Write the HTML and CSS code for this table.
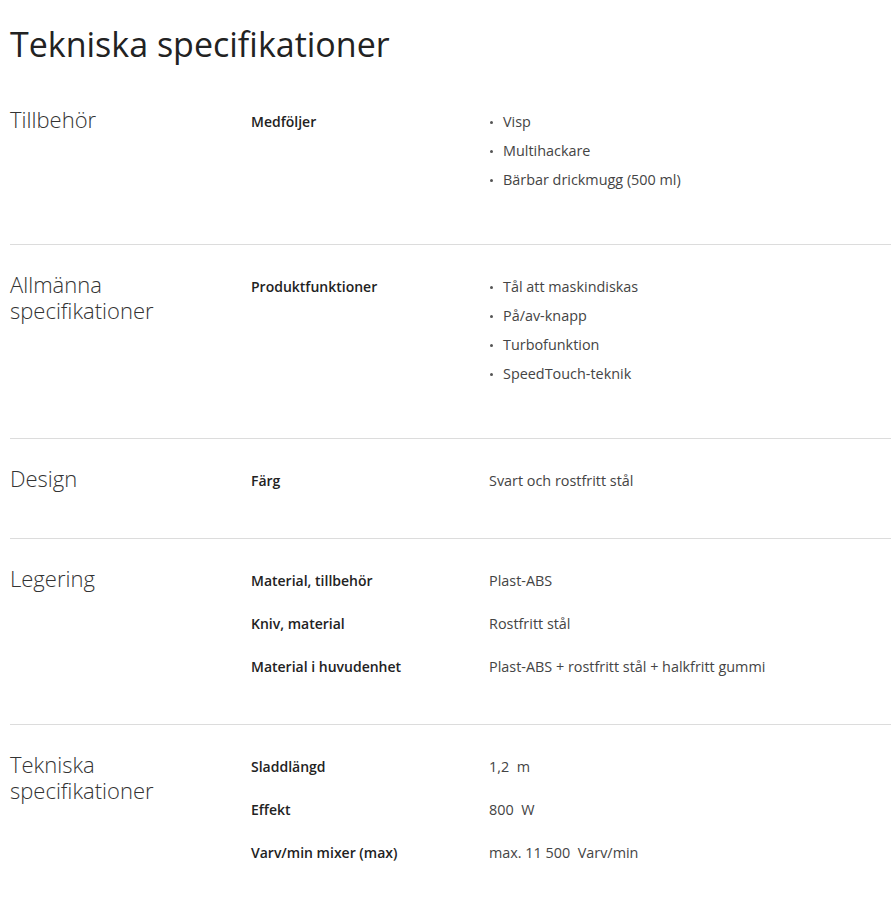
FILE: index.html
```html
<!DOCTYPE html>
<html lang="sv">
<head>
<meta charset="utf-8">
<title>Tekniska specifikationer</title>
<link rel="stylesheet" href="styles.css">
</head>
<body>
<main class="specs">
  <h1 class="title">Tekniska specifikationer</h1>

  <section class="group">
    <h2 class="group-name">Tillbehör</h2>
    <div class="rows">
      <div class="row">
        <div class="label">Medföljer</div>
        <ul class="value list">
          <li>Visp</li>
          <li>Multihackare</li>
          <li>Bärbar drickmugg (500 ml)</li>
        </ul>
      </div>
    </div>
  </section>

  <section class="group">
    <h2 class="group-name">Allmänna specifikationer</h2>
    <div class="rows">
      <div class="row">
        <div class="label">Produktfunktioner</div>
        <ul class="value list">
          <li>Tål att maskindiskas</li>
          <li>På/av-knapp</li>
          <li>Turbofunktion</li>
          <li>SpeedTouch-teknik</li>
        </ul>
      </div>
    </div>
  </section>

  <section class="group">
    <h2 class="group-name">Design</h2>
    <div class="rows">
      <div class="row">
        <div class="label">Färg</div>
        <div class="value">Svart och rostfritt stål</div>
      </div>
    </div>
  </section>

  <section class="group">
    <h2 class="group-name">Legering</h2>
    <div class="rows">
      <div class="row">
        <div class="label">Material, tillbehör</div>
        <div class="value">Plast-ABS</div>
      </div>
      <div class="row">
        <div class="label">Kniv, material</div>
        <div class="value">Rostfritt stål</div>
      </div>
      <div class="row">
        <div class="label">Material i huvudenhet</div>
        <div class="value">Plast-ABS + rostfritt stål + halkfritt gummi</div>
      </div>
    </div>
  </section>

  <section class="group">
    <h2 class="group-name">Tekniska specifikationer</h2>
    <div class="rows">
      <div class="row">
        <div class="label">Sladdlängd</div>
        <div class="value">1,2&nbsp; m</div>
      </div>
      <div class="row">
        <div class="label">Effekt</div>
        <div class="value">800&nbsp; W</div>
      </div>
      <div class="row">
        <div class="label">Varv/min mixer (max)</div>
        <div class="value">max. 11 500&nbsp; Varv/min</div>
      </div>
    </div>
  </section>
</main>
</body>
</html>
```

FILE: styles.css
```css
* { box-sizing: border-box; }

html, body {
  margin: 0;
  padding: 0;
  background: #ffffff;
}

body {
  font-family: "Open Sans", "Noto Sans", sans-serif;
  color: #333;
}

.specs {
  padding: 0 0 0 10px;
}

.title {
  margin: 0;
  padding: 24px 0 0 0;
  height: 80px;
  font-size: 34px;
  font-weight: 400;
  line-height: 40px;
  color: #222;
  letter-spacing: 0;
}

.group {
  display: grid;
  grid-template-columns: 241px 1fr;
  padding: 32px 0 24px;
  border-bottom: 1px solid #dcdcdc;
}

.group:last-child {
  border-bottom: none;
}

.group-name {
  margin: -6px 0 0;
  font-size: 22px;
  font-weight: 300;
  line-height: 26px;
  color: #333;
  padding-right: 40px;
}

.rows {
  display: flex;
  flex-direction: column;
}

.row {
  display: grid;
  grid-template-columns: 238px 1fr;
  padding-bottom: 23px;
  font-size: 14px;
  line-height: 20px;
}

.label {
  font-weight: 600;
  color: #222;
}

.value {
  color: #444;
  font-size: 14.4px;
}

.list {
  margin: 0;
  padding: 0 0 7px;
  list-style: none;
  display: flex;
  flex-direction: column;
  gap: 9px;
}

.list li {
  position: relative;
  padding-left: 14px;
}

.list li::before {
  content: "";
  position: absolute;
  left: 1px;
  top: 9px;
  width: 3px;
  height: 3px;
  border-radius: 50%;
  background: #555;
}
```
